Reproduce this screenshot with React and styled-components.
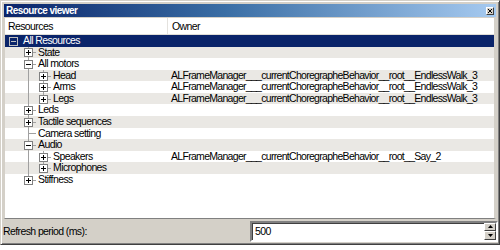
import React from "react";
import styled, { createGlobalStyle } from "styled-components";

const FONT = `"Liberation Sans", Arial, sans-serif`;

const Global = createGlobalStyle`
  html, body { margin: 0; padding: 0; background: #ffffff; }
  body { font-family: "Liberation Sans", Arial, sans-serif; }
`;

const Window = styled.div`
  box-sizing: border-box;
  width: 500px;
  height: 245px;
  background: #d4d0c8;
  border-top: 1px solid #d4d0c8;
  border-left: 1px solid #d4d0c8;
  border-right: 1px solid #404040;
  border-bottom: 1px solid #404040;
  box-shadow: inset 1px 1px 0 #ffffff, inset -1px -1px 0 #808080;
  padding: 2px 2px 2px 2px;
  display: flex;
  flex-direction: column;
`;

const TitleBar = styled.div`
  height: 13px;
  margin: 1px 1px 1px 1px;
  background: linear-gradient(to right, #0a246a 0%, #3a6ea5 45%, #a6caf0 100%);
  display: flex;
  align-items: center;
  justify-content: space-between;
  padding: 0 2px 0 2px;
`;

const Title = styled.span`
  color: #ffffff;
  font-weight: bold;
  font-size: 10px;
  letter-spacing: -0.55px;
  font-family: ${FONT};
`;

const CloseButton = styled.div`
  box-sizing: border-box;
  width: 8px;
  height: 8px;
  background: #d4d0c8;
  border: 1px solid;
  border-color: #ffffff #404040 #404040 #ffffff;
  display: flex;
  align-items: center;
  justify-content: center;
`;

const Tree = styled.div`
  flex: 1;
  box-sizing: border-box;
  margin: 0 1px;
  background: #ffffff;
  border-right: 2px solid #d4d0c8;
  border-left: 1px solid #d4d0c8;
  border-bottom: 1px solid #808080;
  display: flex;
  flex-direction: column;
  overflow: hidden;
`;

const Header = styled.div`
  height: 16px;
  display: grid;
  grid-template-columns: 163px 1fr;
  border-bottom: 1px solid #e0ded8;
  font-family: ${FONT};
  font-size: 10.5px;
  letter-spacing: -0.6px;
  color: #000;
`;

const HeaderCell = styled.div`
  display: flex;
  align-items: center;
  padding-left: ${(p) => p.$pad}px;
  border-right: ${(p) => (p.$sep ? "1px solid #e4e2de" : "none")};
`;

const Row = styled.div`
  height: 11.58px;
  display: grid;
  grid-template-columns: 163px 1fr;
  background: ${(p) => (p.$selected ? "#0a246a" : p.$alt ? "#eae8e4" : "#ffffff")};
  color: ${(p) => (p.$selected ? "#ffffff" : "#000000")};
  font-family: ${FONT};
  font-size: 10.5px;
  letter-spacing: -0.6px;
  line-height: 11.58px;
  white-space: nowrap;
`;

const NameCell = styled.div`
  display: flex;
  align-items: stretch;
  padding-left: 1px;
  overflow: hidden;
`;

const Indent = styled.div`
  position: relative;
  width: 15px;
  flex: none;
`;

const VLine = styled.div`
  position: absolute;
  left: 7px;
  top: 0;
  width: 1px;
  height: ${(p) => (p.$half ? "50%" : "100%")};
  background: #a0a0a0;
`;

const HLine = styled.div`
  position: absolute;
  left: 7px;
  top: 50%;
  width: 8px;
  height: 1px;
  background: #a0a0a0;
`;

const Box = styled.div`
  position: absolute;
  left: 3px;
  top: 50%;
  margin-top: -4px;
  box-sizing: border-box;
  width: 9px;
  height: 9px;
  border: 1px solid ${(p) => (p.$sel ? "#c0c0c0" : "#808080")};
  background: ${(p) => (p.$sel ? "transparent" : "#ffffff")};
`;

const Label = styled.span`
  padding-left: 2px;
`;

const OwnerCell = styled.div`
  padding-left: 3px;
  letter-spacing: -0.7px;
`;

const Footer = styled.div`
  height: 22px;
  display: flex;
  align-items: center;
  justify-content: space-between;
  padding: 1px 0 0 0;
`;

const FooterLabel = styled.span`
  font-family: ${FONT};
  font-size: 10.5px;
  letter-spacing: -0.6px;
  color: #000;
`;

const Spin = styled.div`
  box-sizing: border-box;
  width: 248px;
  height: 21px;
  background: #ffffff;
  border: 2px solid;
  border-color: #808080 #ffffff #ffffff #808080;
  box-shadow: inset 1px 1px 0 #404040;
  display: flex;
  align-items: stretch;
  margin-right: -1px;
`;

const SpinValue = styled.div`
  flex: 1;
  display: flex;
  align-items: center;
  padding-left: 3px;
  font-family: ${FONT};
  font-size: 10.5px;
  letter-spacing: -0.6px;
`;

const SpinButtons = styled.div`
  width: 12px;
  display: flex;
  flex-direction: column;
`;

const SpinBtn = styled.div`
  flex: 1;
  box-sizing: border-box;
  background: #d4d0c8;
  border: 1px solid;
  border-color: #ffffff #404040 #404040 #ffffff;
  display: flex;
  align-items: center;
  justify-content: center;
`;

const Arrow = ({ up }) => (
  <svg width="5" height="3" viewBox="0 0 5 3">
    <polygon points={up ? "2.5,0 5,3 0,3" : "0,0 5,0 2.5,3"} fill="#000" />
  </svg>
);

const Expander = ({ open, sel }) => (
  <Box $sel={sel}>
    <svg width="7" height="7" viewBox="0 0 7 7" style={{ display: "block" }}>
      <rect x="1" y="3" width="5" height="1" fill={sel ? "#c0c0c0" : "#000"} />
      {!open && <rect x="3" y="1" width="1" height="5" fill="#000" />}
    </svg>
  </Box>
);

const OWNER_WALK = "ALFrameManager___currentChoregrapheBehavior__root__EndlessWalk_3";

const rows = [
  { level: 0, label: "All Resources", kids: true, open: true, next: false, anc: [] },
  { level: 1, label: "State", kids: true, next: true, anc: [false] },
  { level: 1, label: "All motors", kids: true, open: true, next: true, anc: [false] },
  { level: 2, label: "Head", kids: true, next: true, anc: [false, true], owner: OWNER_WALK },
  { level: 2, label: "Arms", kids: true, next: true, anc: [false, true], owner: OWNER_WALK },
  { level: 2, label: "Legs", kids: true, next: false, anc: [false, true], owner: OWNER_WALK },
  { level: 1, label: "Leds", kids: true, next: true, anc: [false] },
  { level: 1, label: "Tactile sequences", kids: true, next: true, anc: [false] },
  { level: 1, label: "Camera setting", kids: false, next: true, anc: [false] },
  { level: 1, label: "Audio", kids: true, open: true, next: true, anc: [false] },
  { level: 2, label: "Speakers", kids: true, next: true, anc: [false, true], owner: "ALFrameManager___currentChoregrapheBehavior__root__Say_2" },
  { level: 2, label: "Microphones", kids: true, next: false, anc: [false, true] },
  { level: 1, label: "Stiffness", kids: true, next: false, anc: [false] },
];

export default function App() {
  return (
    <>
      <Global />
      <Window>
        <TitleBar>
          <Title>Resource viewer</Title>
          <CloseButton>
            <svg width="4" height="4" viewBox="0 0 4 4">
              <path d="M0 0L4 4M4 0L0 4" stroke="#000" strokeWidth="1" />
            </svg>
          </CloseButton>
        </TitleBar>
        <Tree>
          <Header>
            <HeaderCell $pad={3} $sep>Resources</HeaderCell>
            <HeaderCell $pad={4}>Owner</HeaderCell>
          </Header>
          {rows.map((r, i) => (
            <Row key={i} $selected={i === 0} $alt={i % 2 === 1}>
              <NameCell>
                {r.anc.map((c, k) => (
                  <Indent key={k}>{c && <VLine />}</Indent>
                ))}
                <Indent>
                  {r.level > 0 && <VLine $half={!r.next} />}
                  {r.level > 0 && <HLine />}
                  {r.kids && <Expander open={r.open} sel={i === 0} />}
                </Indent>
                <Label>{r.label}</Label>
              </NameCell>
              <OwnerCell>{r.owner || ""}</OwnerCell>
            </Row>
          ))}
        </Tree>
        <Footer>
          <FooterLabel>Refresh period (ms):</FooterLabel>
          <Spin>
            <SpinValue>500</SpinValue>
            <SpinButtons>
              <SpinBtn><Arrow up /></SpinBtn>
              <SpinBtn><Arrow /></SpinBtn>
            </SpinButtons>
          </Spin>
        </Footer>
      </Window>
    </>
  );
}
